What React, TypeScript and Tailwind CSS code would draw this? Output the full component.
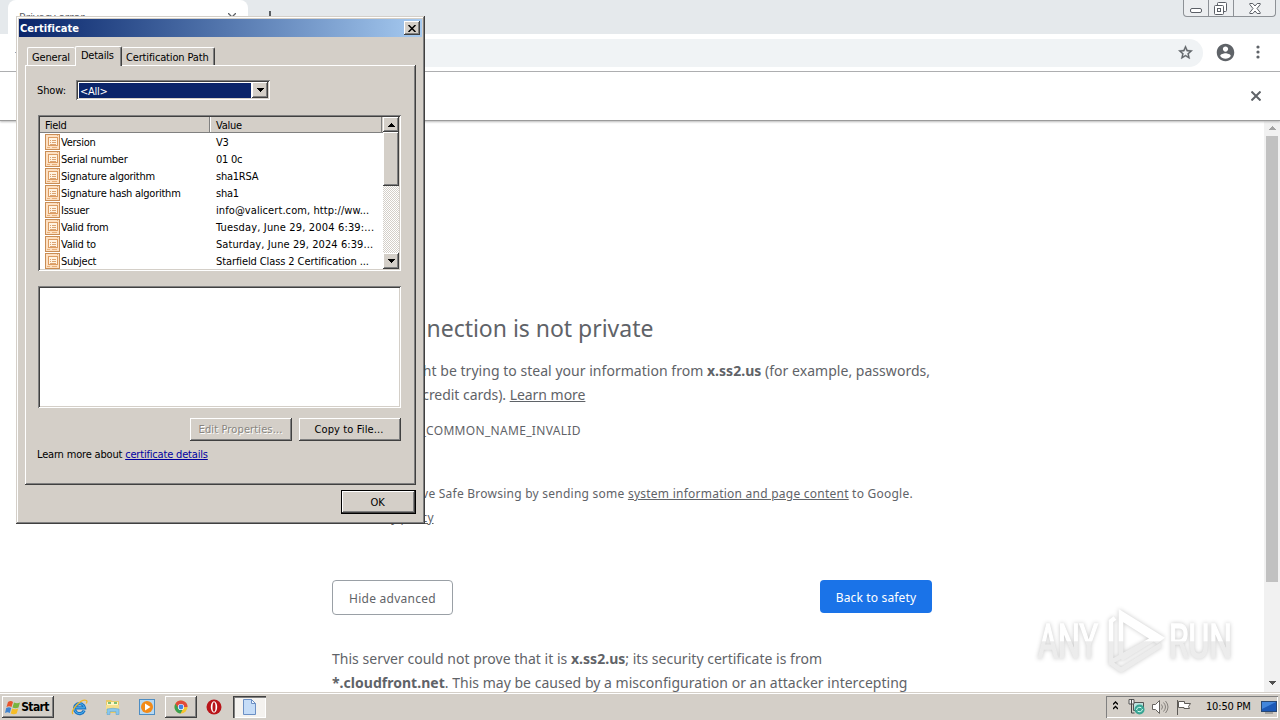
import { ReactNode } from 'react'
import clsx from 'clsx'

interface CertField {
  name: string
  value: string
  valueClass?: string
}

const FIELDS: CertField[] = [
  { name: 'Version', value: 'V3' },
  { name: 'Serial number', value: '01 0c' },
  { name: 'Signature algorithm', value: 'sha1RSA' },
  { name: 'Signature hash algorithm', value: 'sha1' },
  { name: 'Issuer', value: 'info@valicert.com, http://ww...', valueClass: 'tracking-[0.08px]' },
  { name: 'Valid from', value: 'Tuesday, June 29, 2004 6:39:...', valueClass: 'tracking-[0.16px]' },
  { name: 'Valid to', value: 'Saturday, June 29, 2024 6:39...', valueClass: 'tracking-[0.09px]' },
  { name: 'Subject', value: 'Starfield Class 2 Certification ...', valueClass: 'tracking-[-0.1px]' },
]

const raised =
  'bg-[#d4cfc8] shadow-[inset_-1px_-1px_#404040,inset_1px_1px_#fff,inset_-2px_-2px_#808080]'
const sunken =
  'bg-white shadow-[inset_1px_1px_#808080,inset_-1px_-1px_#fff,inset_2px_2px_#404040,inset_-2px_-2px_#d4cfc8]'

function Arrow({ up = false, color = '#000' }: { up?: boolean; color?: string }) {
  return (
    <svg width="7" height="4" viewBox="0 0 7 4" shapeRendering="crispEdges">
      <path d={up ? 'M3 0h1v1h1v1h1v1h1v1H0V3h1V2h1V1h1z' : 'M0 0h7v1H6v1H5v1H4v1H3V3H2V2H1V1H0z'} fill={color} />
    </svg>
  )
}

function FieldIcon() {
  return (
    <svg width="15" height="16" viewBox="0 0 15 16" className="mr-px shrink-0" shapeRendering="crispEdges">
      <rect x="0.5" y="0.5" width="14" height="15" fill="#fde0c2" stroke="#c98d55" />
      <rect x="3.5" y="3.5" width="9" height="8" fill="#fff3e2" stroke="#dc9c62" />
      <path d="M5 6h1M7 6h4M5 8h1M7 8h4M5 10h6" stroke="#dba473" />
      <path d="M2 13.5h3M7 13.5h5M12 1.5h1" stroke="#e9b07a" />
    </svg>
  )
}

function WindowControls() {
  return (
    <div className="flex h-[17px] w-[93px] rounded-b-[4px] border border-t-0 border-[#8d9196] bg-[#eceef0]">
      <div className="flex w-[25px] items-end justify-center border-r border-[#8d9196] pb-[3px]">
        <div className="h-[5px] w-[12px] rounded-[2px] border border-[#5b5f66] bg-white" />
      </div>
      <div className="flex w-[25px] items-center justify-center border-r border-[#8d9196]">
        <svg width="13" height="13" viewBox="0 0 13 13" fill="#fff" stroke="#5b5f66" className="-ml-px">
          <rect x="3.5" y="0.5" width="9" height="9" rx="1" />
          <rect x="0.5" y="3.5" width="9" height="9" rx="1" />
          <rect x="3.5" y="6.5" width="3" height="3" />
        </svg>
      </div>
      <div className="flex flex-1 items-center justify-center">
        <svg width="12" height="11" viewBox="0 0 12 11" fill="#fff" stroke="#5b5f66">
          <path d="M.8.5h3L6 3 8.2.5h3v1L8 5.5l3.2 4v1h-3L6 8l-2.2 2.5h-3v-1L4 5.500.8 1.500z" />
        </svg>
      </div>
    </div>
  )
}

function Browser() {
  return (
    <div className="flex h-[692px] flex-col overflow-hidden bg-white font-['Noto_Sans',sans-serif] text-[#5f6368]">
      {/* Tab strip */}
      <div className="flex h-[34px] shrink-0 items-start bg-[#e5e9ec]">
        <div className="ml-2 flex h-[34px] w-[240px] items-start rounded-t-lg bg-white pt-[8px] pr-3 pl-[11px]">
          <span className="flex-1 text-[11px] leading-[18px]">Privacy error</span>
          <svg width="8" height="8" viewBox="0 0 8 8" className="mt-[5px]" stroke="#5f6368" strokeWidth="1.3">
            <path d="M0 0l8 8M8 0L0 8" />
          </svg>
        </div>
        <svg width="12" height="12" viewBox="0 0 12 12" className="mt-[11px] ml-[16px]" stroke="#4d5156" strokeWidth="1.8">
          <path d="M6 0v12M0 6h12" />
        </svg>
        <div className="mr-[4px] ml-auto">
          <WindowControls />
        </div>
      </div>

      {/* Toolbar */}
      <div className="flex h-[38px] shrink-0 items-center border-b border-[#adaeb0] bg-white">
        <span className="ml-[15px] h-px w-px bg-gray-400" />
        <div className="ml-[90px] flex h-[28px] w-[1097px] items-center justify-end rounded-full bg-[#f0f3f5] pr-[9px]">
          <svg width="17" height="17" viewBox="0 0 24 24" fill="#5f6368" stroke="#5f6368" strokeWidth="0.500">
            <path d="M22 9.240l-7.190-.620L12 2 9.190 8.630 2 9.240l5.460 4.730L5.820 21 12 17.270 18.180 21l-1.630-7.030L22 9.240zM12 15.400l-3.760 2.270 1-4.280-3.320-2.880 4.380-.380L12 6.100l1.710 4.040 4.380.380-3.320 2.880 1 4.280L12 15.400z" />
          </svg>
        </div>
        <svg width="21" height="21" viewBox="0 0 24 24" fill="#5f6368" className="-mt-px ml-[12px]">
          <path d="M12 2C6.480 2 2 6.480 2 12s4.480 10 10 10 10-4.480 10-10S17.520 2 12 2zm0 3c1.660 0 3 1.340 3 3s-1.340 3-3 3-3-1.340-3-3 1.340-3 3-3zm0 14.200c-2.500 0-4.710-1.280-6-3.220.030-1.990 4-3.080 6-3.080 1.990 0 5.970 1.090 6 3.080-1.290 1.940-3.500 3.220-6 3.220z" />
        </svg>
        <svg width="4" height="14" viewBox="0 0 4 14" fill="#5f6368" className="-mt-px ml-[20px]">
          <circle cx="2" cy="2" r="1.600" />
          <circle cx="2" cy="7" r="1.600" />
          <circle cx="2" cy="12" r="1.600" />
        </svg>
      </div>

      {/* Info bar */}
      <div className="relative z-10 flex h-[49px] shrink-0 items-center justify-end border-b border-[#9b9b9b] bg-white pr-[19px] shadow-[0_1px_2px_#bbb]">
        <svg width="10" height="10" viewBox="0 0 10 10" stroke="#5f6368" strokeWidth="2">
          <path d="M.5.5l9 9M9.500.5l-9 9" />
        </svg>
      </div>

      <div className="flex min-h-0 flex-1">
        <main className="w-[1264px] overflow-hidden pt-[191px] pl-[332px]">
          <div className="w-[640px] whitespace-nowrap">
            <h1 className="h-[47px] text-[23px] leading-[33px] tracking-[-0.02px]">Your connection is not private</h1>
            <p className="text-[14px] leading-[24px] tracking-[0.03px]">
              Attackers might be trying to steal your information from <b>x.ss2.us</b> (for example, passwords,
              <br />
              <span className="tracking-[-0.04px]">
                messages, or credit cards). <span className="underline">Learn more</span>
              </span>
            </p>
            <p className="mt-[12px] text-[12px] leading-[24px] tracking-[0.32px]">NET::ERR_CERT_COMMON_NAME_INVALID</p>
            <p className="mt-[39px] pl-[25px] text-[12px] leading-[24px] tracking-[0.24px]">
              Help improve Safe Browsing by sending some{' '}
              <span className="underline">system information and page content</span> to Google.
              <br />
              <span className="tracking-[0.05px] underline">Privacy policy</span>
            </p>
            <div className="mt-[50px] flex h-[35px] w-[600px] items-start justify-between text-[12px] tracking-[0.25px]">
              <div className="flex h-[35px] w-[121px] items-center justify-center rounded-[4px] border border-[#9aa0a6] pt-[2px]">
                Hide advanced
              </div>
              <div className="flex h-[33px] w-[112px] items-center justify-center rounded-[4px] bg-[#1a73e8] pt-[2px] tracking-[0.15px] text-white">
                Back to safety
              </div>
            </div>
            <p className="mt-[32px] text-[14px] leading-[24px] tracking-[0.02px]">
              This server could not prove that it is <b>x.ss2.us</b>; its security certificate is from
              <br />
              <b>*.cloudfront.net</b>. This may be caused by a misconfiguration or an attacker intercepting
            </p>
          </div>
        </main>

        {/* Page scrollbar */}
        <div className="flex w-[16px] flex-col items-center bg-[#f1f1f1] pt-[5px] pb-[7px]">
          <Arrow up color="#a3a3a3" />
          <div className="mt-[6px] h-[446px] w-[12px] bg-[#c1c1c1]" />
          <div className="mt-auto flex">
            <Arrow color="#505050" />
          </div>
        </div>
      </div>
    </div>
  )
}

function DialogButton({ className, children }: { className?: string; children: ReactNode }) {
  return <div className={clsx('flex items-center justify-center', raised, className)}>{children}</div>
}

function CertificateDialog() {
  return (
    <div
      className={clsx(
        "absolute top-[16px] left-[16px] z-20 h-[508px] w-[409px] p-[3px] font-['DejaVu_Sans_Condensed','DejaVu_Sans',sans-serif] text-[11px] leading-[17px] tracking-[-0.25px] whitespace-nowrap text-black [font-stretch:condensed]",
        'bg-[#d4cfc8] shadow-[inset_-1px_-1px_#404040,inset_1px_1px_#d4cfc8,inset_-2px_-2px_#808080,inset_2px_2px_#fff]'
      )}
    >
      {/* Title bar */}
      <div className="flex h-[18px] items-center bg-linear-to-r from-[#0a246a] to-[#a6caf0] pr-[2px] pl-[1px]">
        <span className="flex-1 font-bold tracking-[0.03px] text-white">Certificate</span>
        <div className={clsx('flex h-[14px] w-[16px] items-center justify-center', raised)}>
          <svg width="8" height="7" viewBox="0 0 8 7" stroke="#000" strokeWidth="1.500">
            <path d="M.5 0l7 7M7.500 0l-7 7" />
          </svg>
        </div>
      </div>

      {/* Tabs */}
      <div className="mt-[9px] ml-[8px] flex h-[20px] items-end">
        <div className="mb-px h-[18px] w-[48px] rounded-t-[2px] border-t border-l border-white pt-px pl-[4px] tracking-[-0.15px]">
          General
        </div>
        <div className="relative z-10 h-[20px] w-[47px] rounded-t-[2px] border-t border-r border-l border-t-white border-r-[#404040] border-l-white bg-[#d4cfc8] pl-[5px] shadow-[inset_-1px_0_#808080]">
          Details
        </div>
        <div className="mb-px h-[18px] w-[93px] rounded-t-[2px] border-t border-r border-t-white border-r-[#404040] pt-px pl-[4px] tracking-[-0.15px] shadow-[inset_-1px_0_#808080]">
          Certification Path
        </div>
      </div>

      <div className={clsx('-mt-px ml-[6px] h-[420px] w-[391px] pt-[15px] pl-[13px]', raised)}>
        <div className="flex h-[20px] items-center">
          <span className="-ml-[1px] w-[39px] tracking-[-0.1px]">Show:</span>
          <div className={clsx('flex h-[20px] w-[194px] p-[2px]', sunken)}>
            <div className="m-px h-[15px] flex-1 bg-[#0a246a] pl-px leading-[17px] text-white">&lt;All&gt;</div>
            <div className={clsx('flex w-[16px] items-center justify-center', raised)}>
              <Arrow />
            </div>
          </div>
        </div>

        {/* Field list */}
        <div className={clsx('mt-[15px] flex h-[156px] w-[363px] p-[2px]', sunken)}>
          <div className="w-[343px] overflow-hidden">
            <div className="flex h-[16px] border-b border-[#808080] bg-[#d4cfc8]">
              <div className="w-[170px] border-r border-[#808080] pl-[5px]">Field</div>
              <div className="w-[172px] border-r border-l border-r-[#808080] border-l-white pl-[5px]">Value</div>
            </div>
            {FIELDS.map((field) => (
              <div key={field.name} className="flex h-[17px] items-center pl-[5px]">
                <FieldIcon />
                <span className="w-[155px] pt-[2px]">{field.name}</span>
                <span className={clsx('pt-[2px]', field.valueClass)}>{field.value}</span>
              </div>
            ))}
          </div>
          <div className="flex w-[16px] flex-col bg-[repeating-conic-gradient(#fff_0_25%,#d4cfc8_0_50%)] bg-[length:2px_2px]">
            <div className={clsx('flex h-[15px] items-center justify-center', raised)}>
              <Arrow up />
            </div>
            <div className={clsx('h-[54px]', raised)} />
            <div className={clsx('mt-auto flex h-[16px] items-center justify-center', raised)}>
              <Arrow />
            </div>
          </div>
        </div>

        <div className={clsx('mt-[15px] h-[122px] w-[363px]', sunken)} />

        <div className="mt-[10px] flex h-[23px] w-[363px] justify-end gap-[7px] tracking-[0.12px]">
          <DialogButton className="w-[102px] pr-px text-[#88857f] [text-shadow:1px_1px_#fff]">Edit Properties...</DialogButton>
          <DialogButton className="w-[102px] pr-[2px]">Copy to File...</DialogButton>
        </div>
        <div className="mt-[5px] -ml-px tracking-[-0.18px]">
          Learn more about <span className="text-[#0000a0] underline">certificate details</span>
        </div>
      </div>

      <div className="mt-[5px] flex justify-end pr-[6px]">
        <div className="h-[24px] w-[75px] border border-black">
          <DialogButton className="h-full pr-[2px]">OK</DialogButton>
        </div>
      </div>
    </div>
  )
}

function Watermark() {
  return (
    <svg
      width="214"
      height="76"
      viewBox="0 0 214 76"
      className="absolute top-[606px] left-[1034px] z-10 drop-shadow-[0_0_2px_rgba(0,0,0,0.22)]"
      fill="url(#sheen)"
    >
      <defs>
        <linearGradient id="sheen" gradientUnits="userSpaceOnUse" x1="0" y1="0" x2="0" y2="76">
          <stop offset="0.46" stopColor="#fff" />
          <stop offset="0.47" stopColor="#ececec" />
        </linearGradient>
      </defs>
      <g fontFamily="Roboto, sans-serif" fontSize="49" stroke="url(#sheen)" strokeWidth="1.500">
        <text x="4" y="52" textLength="60" lengthAdjust="spacingAndGlyphs">
          ANY
        </text>
        <text x="135" y="52" textLength="63" lengthAdjust="spacingAndGlyphs">
          RUN
        </text>
      </g>
      <g fill="none" stroke="url(#sheen)" strokeWidth="4.500">
        <path d="M87 53V7l40 25-4 3-36-23" />
        <path d="M87 53l34-21" />
        <path d="M81 12l-4 3v41l40-22" />
        <path d="M77 57l10 7 40-25" />
      </g>
    </svg>
  )
}

function TaskButton({ className, children }: { className?: string; children: ReactNode }) {
  return <div className={clsx('flex h-[22px] items-center justify-center', className)}>{children}</div>
}

function Taskbar() {
  return (
    <div className="flex h-[28px] items-center border-t border-[#d4cfc8] bg-[#d4cfc8] pt-px font-['DejaVu_Sans_Condensed','DejaVu_Sans',sans-serif] text-[11px] tracking-[-0.25px] text-black shadow-[inset_0_1px_#fff] [font-stretch:condensed]">
      <TaskButton className={clsx('ml-[2px] w-[52px] pr-[2px] text-[12px] font-bold tracking-[-0.6px]', raised)}>
        <svg width="16" height="15" viewBox="0 0 16 15">
          <path d="M3 2q3-2 5 0L6.500 7Q4 5.500 1.500 7z" fill="#e8542c" />
          <path d="M9 2.500q3 1.500 6 0L13.500 7.500q-3 1.500-6 0z" fill="#77b43f" />
          <path d="M1.200 8q3-1.500 5 0L4.800 13Q2.500 11.500 0 13z" fill="#3f83d0" />
          <path d="M7.200 8.500q3 1.500 6 0L11.700 13.500q-3 1.500-6 0z" fill="#f6bd27" />
        </svg>
        <span>Start</span>
      </TaskButton>

      {/* Internet Explorer */}
      <TaskButton className="ml-[9px] w-[33px]">
        <svg width="17" height="17" viewBox="0 0 17 17" fill="none">
          <path d="M13.200 11.500A5 5 0 1 1 13.500 8.800H5" stroke="#1c74c4" strokeWidth="3.200" />
          <path d="M13.200 11.500A5 5 0 1 1 13.500 8.800H5" stroke="#4db5ef" strokeWidth="1" />
          <path d="M2 15C-1 12 10-1 15.500 1.500c1 .8.300 2-.3 3" stroke="#efb72a" strokeWidth="1.300" />
        </svg>
      </TaskButton>
      {/* Explorer */}
      <TaskButton className="w-[33px]">
        <svg width="16" height="16" viewBox="0 0 16 16">
          <path d="M1 1h5l1 1h7v12H1z" fill="#e9ca68" />
          <path d="M2 3h11v5H2z" fill="#fff6c5" />
          <path d="M3 4h3M9 4h3" stroke="#55aa57" strokeWidth="1.500" />
          <path d="M1 6h13v7H1z" fill="#f5df8d" />
          <path d="M2 15.500V10q6-1.500 12 0v5.500h-3v-3H5v3z" fill="#8ac7ec" stroke="#519fd0" strokeWidth=".5" />
        </svg>
      </TaskButton>
      {/* Media player */}
      <TaskButton className="ml-px w-[34px]">
        <svg width="16" height="16" viewBox="0 0 16 16">
          <rect x=".5" y=".5" width="15" height="15" fill="#b6d8f2" stroke="#4d8dc3" />
          <circle cx="8" cy="8" r="6" fill="#f28a18" />
          <path d="M6 4.500v7L11.500 8z" fill="#fff" />
        </svg>
      </TaskButton>
      {/* Chrome */}
      <TaskButton className={clsx('ml-px w-[32px]', raised)}>
        <svg width="14" height="14" viewBox="0 0 14 14">
          <circle cx="7" cy="7" r="6.500" fill="#f7c52e" />
          <path d="M7 7h6.500A6.500 6.500 0 0 0 1.400 3.700L4 9z" fill="#e04a3b" />
          <path d="M1.400 3.700A6.500 6.500 0 0 0 6.500 13.500L9 9H5z" fill="#38a052" />
          <circle cx="7" cy="7" r="3.100" fill="#fff" />
          <circle cx="7" cy="7" r="2.400" fill="#4182e4" />
        </svg>
      </TaskButton>
      {/* Opera */}
      <TaskButton className="ml-px w-[32px]">
        <svg width="16" height="16" viewBox="0 0 16 16">
          <circle cx="8" cy="8" r="7.500" fill="#b91419" />
          <ellipse cx="8" cy="8" rx="3.200" ry="5.800" fill="#fff" />
          <ellipse cx="8" cy="8" rx="1.500" ry="4.800" fill="#b91419" />
        </svg>
      </TaskButton>
      {/* Certificate window */}
      <TaskButton className="ml-[3px] w-[33px] bg-[#f4f2ef] shadow-[inset_1px_1px_#404040,inset_2px_2px_#808080,inset_-1px_-1px_#fff]">
        <svg width="13" height="16" viewBox="0 0 13 16" fill="#c5dcf7" stroke="#6b8fc4">
          <path d="M.5.5h8l4 4v11H.5z" />
          <path d="M8.500.5v4h4z" fill="#eef6ff" />
        </svg>
      </TaskButton>

      {/* Notification area */}
      <div className="mr-[2px] ml-auto flex h-[22px] w-[172px] items-center shadow-[inset_1px_1px_#808080,inset_-1px_-1px_#fff]">
        <svg width="5" height="9" viewBox="0 0 5 9" className="mb-[3px] ml-[7px]" fill="none" stroke="#000" strokeWidth="1.300">
          <path d="M0 3.500L2.500 1 5 3.500M0 8l2.500-2.500L5 8" />
        </svg>
        <svg width="17" height="16" viewBox="0 0 17 16" className="ml-[10px]">
          <path d="M5.500 3.500h10v8h-10z" fill="#bce3df" stroke="#555" />
          <path d="M1 .5h5v4.500H1z" fill="#f4f4f4" stroke="#555" />
          <path d="M3.500 0v14h3" stroke="#444" fill="none" />
          <circle cx="11.500" cy="10.500" r="5" fill="#39a493" />
          <path d="M8.500 11a3 3 0 0 1 5-2M14.500 10a3 3 0 0 1-5 2" stroke="#d8fff5" fill="none" />
        </svg>
        <svg width="17" height="14" viewBox="0 0 17 14" className="ml-[7px]" fill="none" stroke="#66635f">
          <path d="M.5 4.500h3l4-4v13l-4-4h-3z" fill="#fff" />
          <path d="M9.500 4.500q2 2.500 0 5M11.500 2.500q4 4.500 0 9M13.500 1q5 6 0 12" stroke="#85817c" />
        </svg>
        <svg width="16" height="15" viewBox="0 0 16 15" className="ml-[7px]" fill="#fff" stroke="#5e5b57">
          <path d="M1.500 0v15" />
          <path d="M2.500 1.500h6v2h6l-2 3 1 2H8v-1H2.500z" />
        </svg>
        <span className="ml-[14px] pt-px tracking-[-0.18px]">10:50 PM</span>
        <svg width="16" height="13" viewBox="0 0 16 13" className="mr-[1px] ml-auto">
          <rect x=".5" y=".5" width="15" height="10" fill="#1c59b7" stroke="#294873" />
          <path d="M1 1h14L1 8z" fill="#4386dc" />
          <path d="M4 12h8" stroke="#777" />
        </svg>
      </div>
    </div>
  )
}

export default function App() {
  return (
    <div className="relative h-[720px] w-[1280px] overflow-hidden bg-white">
      <Browser />
      <Taskbar />
      <CertificateDialog />
      <Watermark />
    </div>
  )
}
